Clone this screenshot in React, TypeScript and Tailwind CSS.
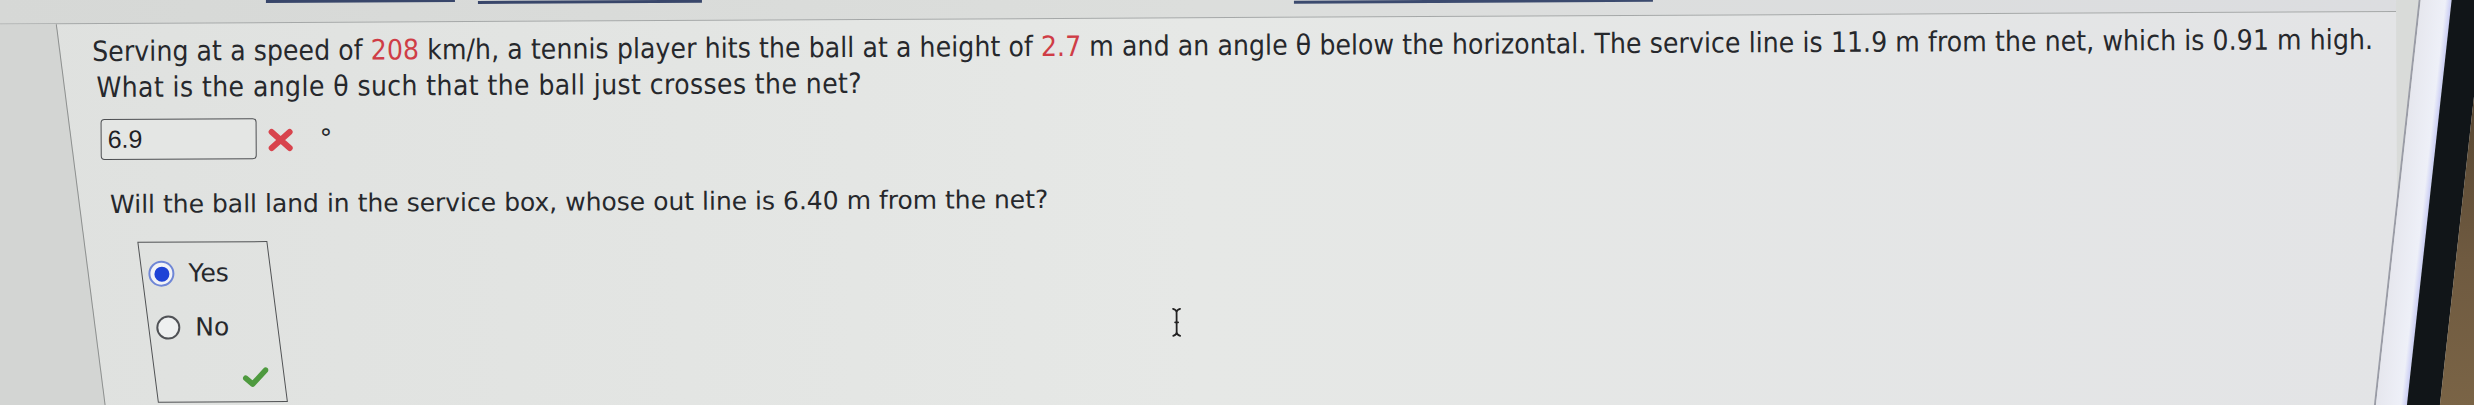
import React from "react";

const q1 =
  "font-['DejaVu_Sans',sans-serif] font-stretch-condensed text-[28px] leading-[36px] whitespace-nowrap text-[#26282c]";
const body = "font-['DejaVu_Sans',sans-serif] text-[25px] leading-[30px] whitespace-nowrap text-[#26282c]";

const Red = ({ children }: { children: React.ReactNode }) => (
  <span className="text-[#cf3d46]">{children}</span>
);

const CrossMark = () => (
  <svg width="28" height="24" viewBox="0 0 28 24" className="shrink-0 mt-[10px] ml-[10px]">
    <path d="M5 4 L23 20 M23 4 L5 20" stroke="#d8444d" strokeWidth="6" strokeLinecap="round" />
  </svg>
);

const CheckMark = () => (
  <svg width="26" height="21" viewBox="0 0 26 21">
    <path
      d="M3 12 L10 18 L23 4"
      fill="none"
      stroke="#4e9a3f"
      strokeWidth="5.5"
      strokeLinecap="round"
      strokeLinejoin="round"
    />
  </svg>
);

// the mouse pointer left in the photo
const IBeam = () => (
  <svg width="10" height="30" viewBox="0 0 10 30" className="absolute left-[1089px] top-[289px]">
    <path
      d="M1.5 1.5 Q5 2.5 5 5 Q5 2.5 8.5 1.5 M5 5 V25 M1.5 28.5 Q5 27.5 5 25 Q5 27.5 8.5 28.5 M3.5 15 H6.5"
      fill="none"
      stroke="#222"
      strokeWidth="1.8"
      strokeLinecap="round"
    />
  </svg>
);

const App = () => {
  return (
    <div className="w-[2474px] h-[405px] overflow-hidden bg-[#d9dbd9]">
      <div className="w-[2474px] h-[421px] -mt-[8px] rotate-[-0.3deg] flex">
        {/* page */}
        <div className="flex-1 min-w-0 flex flex-col bg-[linear-gradient(to_right,#dfe1df,#e6e8e6_50%,#e3e4e6)]">
          <div className="h-[26px] shrink-0 flex items-start border-b border-[#a5a8a8] bg-[linear-gradient(to_right,#d6d8d6,#dcdedc_50%,#dcdde0)]">
            <div className="ml-[267px] mt-[3px] w-[189px] h-[3px] bg-[#38466a]" />
            <div className="ml-[23px] mt-[5px] w-[224px] h-[3px] bg-[#38466a]" />
            <div className="ml-[592px] mt-[9px] w-[359px] h-[3px] bg-[#3b4a6e]" />
          </div>

          <div className="flex-1 flex">
            <div className="w-[122px] -ml-[40px] shrink-0 skew-x-[7deg] bg-[#d3d5d3] border-r-[1.5px] border-[#8d908f]" />

            <div className="relative flex-1 flex flex-col items-start pt-[10px]">
              <div className={`${q1} tracking-[0.08px] ml-[11px]`}>
                Serving at a speed of <Red>208</Red> km/h, a tennis player hits the ball at a height of{" "}
                <Red>2.7</Red> m and an angle θ below the horizontal. The service line is 11.9 m from the net,
                which is 0.91 m high.
              </div>
              <div className={`${q1} tracking-[0.4px] ml-[15px]`}>
                What is the angle θ such that the ball just crosses the net?
              </div>

              <div className="flex items-start mt-[13px] ml-[19px]">
                <div className="w-[156px] h-[41px] flex items-center pl-[6px] border-[1.5px] border-[#4d4f52] rounded-[4px] bg-[#e4e6e4] font-['Liberation_Sans',sans-serif] text-[25px] text-[#1f2124]">
                  6.9
                </div>
                <CrossMark />
                <span className="ml-[25px] mt-[8px] font-['DejaVu_Sans',sans-serif] text-[25px] leading-none text-[#26282c]">
                  °
                </span>
              </div>

              <div className={`${body} mt-[30px] ml-[28px]`}>
                Will the ball land in the service box, whose out line is 6.40 m from the net?
              </div>

              <div className="mt-[22px] ml-[65px] w-[130px] h-[161px] border-[1.5px] border-[#505254] skew-x-[7deg] flex flex-col items-start pt-[16px] pl-[6px]">
                <div className="h-[30px] flex items-center gap-[14px] skew-x-[-7deg]">
                  <span className="w-[26px] h-[26px] rounded-full border-2 border-[#6f86d6] bg-[#f2f3f7] flex items-center justify-center">
                    <span className="w-[15px] h-[15px] rounded-full bg-[#1f43d6]" />
                  </span>
                  <span className={body}>Yes</span>
                </div>
                <div className="h-[30px] mt-[24px] flex items-center gap-[14px] skew-x-[-7deg]">
                  <span className="w-[26px] flex justify-center">
                    <span className="w-[24px] h-[24px] rounded-full border-2 border-[#505256] bg-[#eef0f0]" />
                  </span>
                  <span className={body}>No</span>
                </div>
                <div className="mt-[24px] ml-[81px] skew-x-[-7deg]">
                  <CheckMark />
                </div>
              </div>

              <IBeam />
            </div>
          </div>
        </div>

        {/* monitor edge */}
        <div className="w-[77px] shrink-0 flex skew-x-[-6.6deg]">
          <div className="w-[1.5px] shrink-0 bg-[#9a9ca6]" />
          <div className="w-[31px] shrink-0 bg-[linear-gradient(to_right,#e6e7ee,#eef0f8_80%,#c9ccf4)]" />
          <div className="w-[33px] shrink-0 bg-[#111518]" />
          <div className="w-[80px] shrink-0 bg-[linear-gradient(to_bottom,#2a241d,#5a4934_30%,#6f5a40_65%,#7a6446)]" />
        </div>
      </div>
    </div>
  );
};

export default App;
